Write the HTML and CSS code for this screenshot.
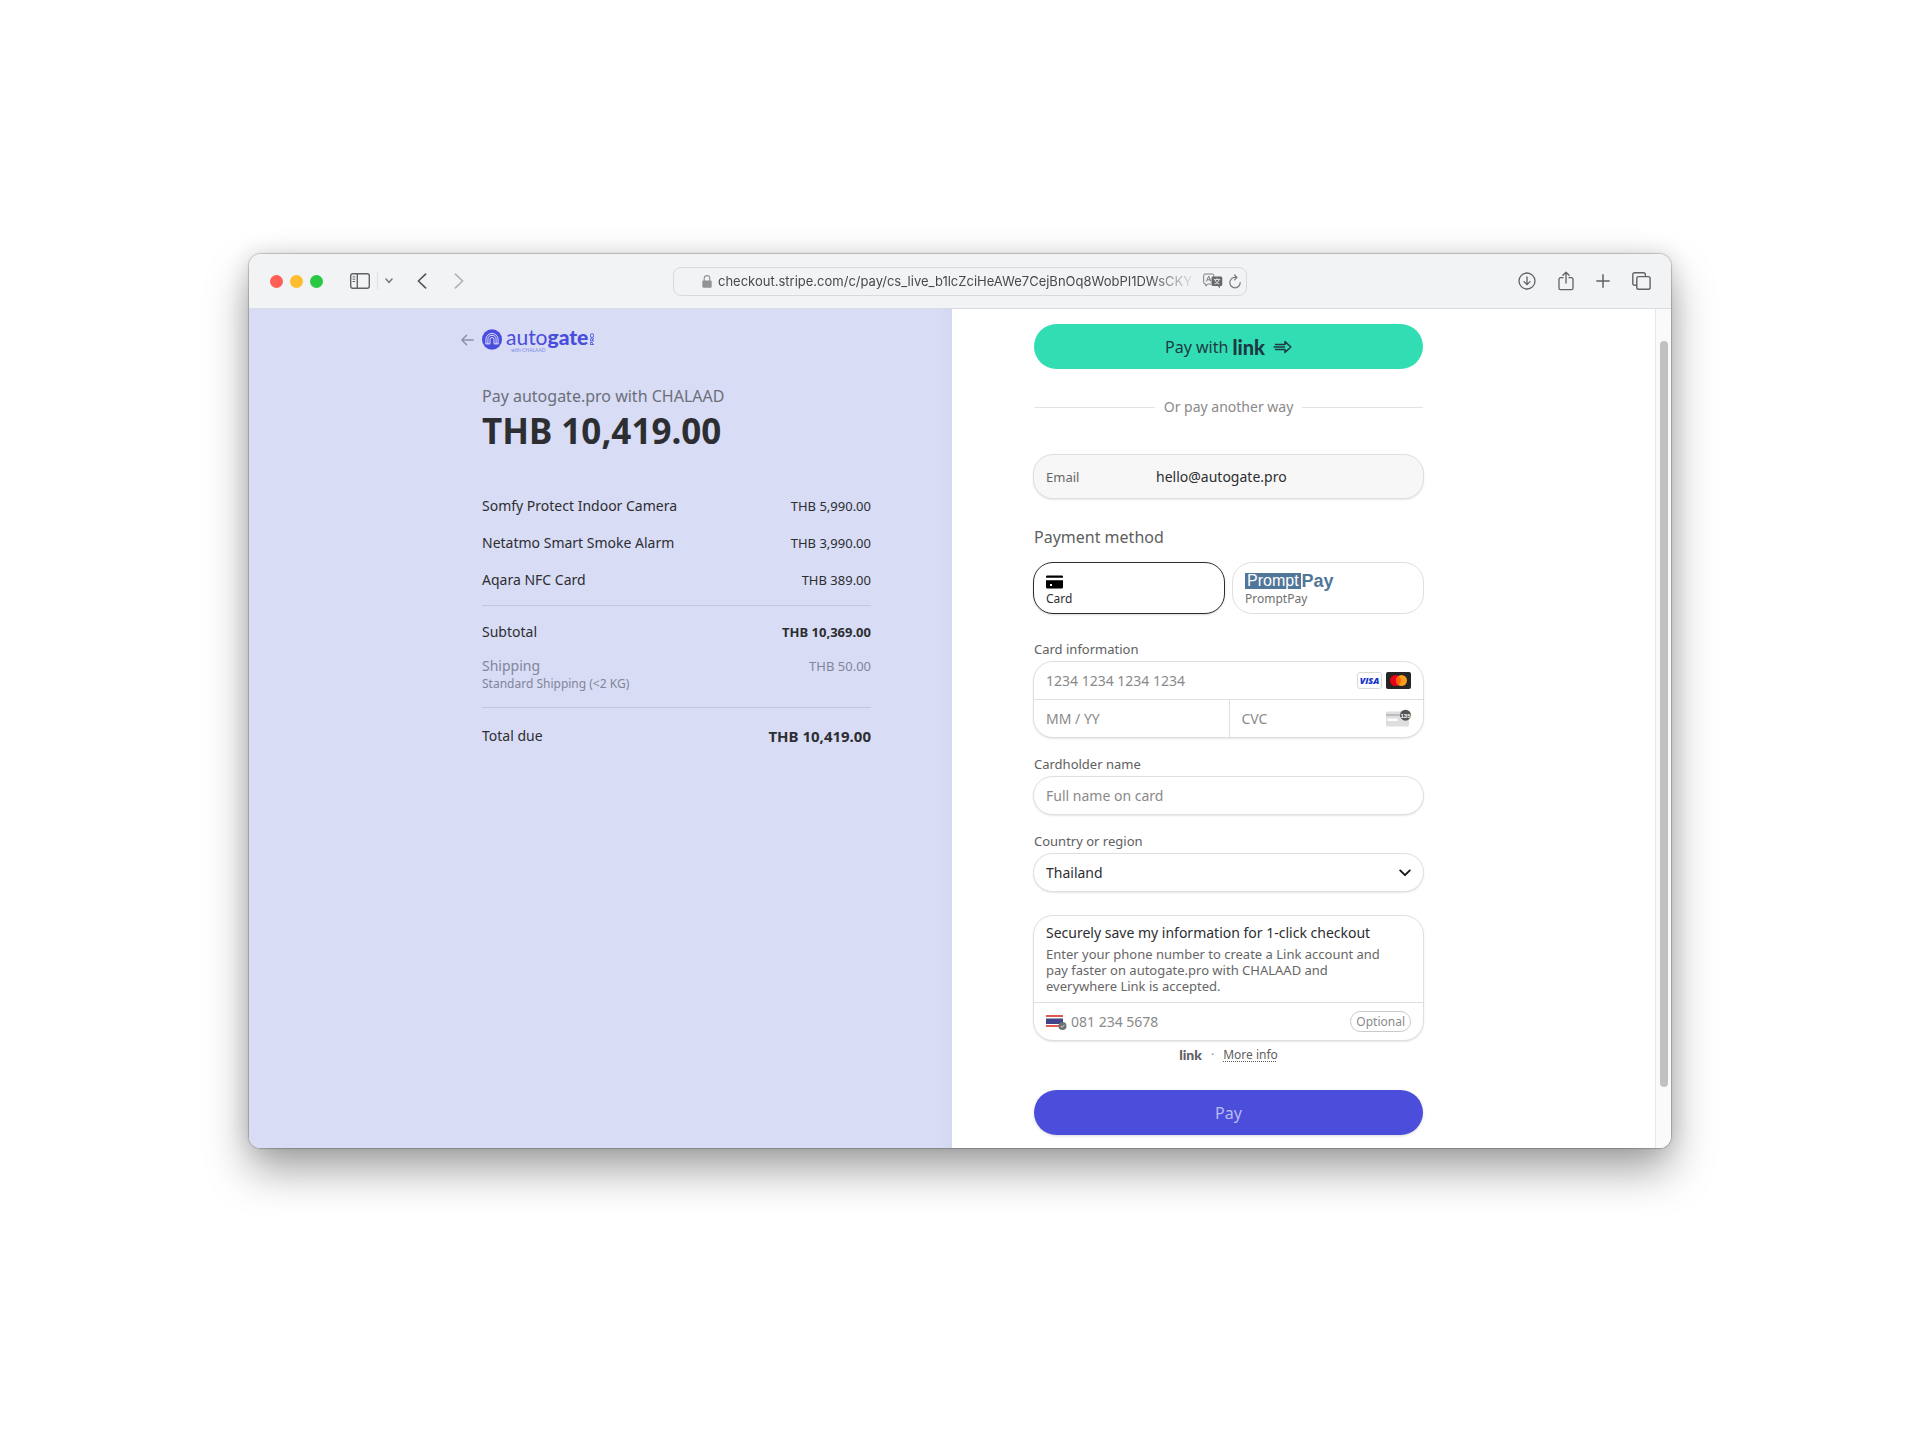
FILE: index.html
```html
<!DOCTYPE html>
<html lang="en">
<head>
<meta charset="utf-8">
<meta name="viewport" content="width=device-width, initial-scale=1">
<title>Checkout</title>
<link rel="stylesheet" href="styles.css">
</head>
<body>
<div class="window">
  <header class="toolbar">
    <div class="tools">
      <div class="lights"><span class="light red"></span><span class="light amber"></span><span class="light green"></span></div>
      <button class="tool sidebar" type="button" aria-label="Sidebar">
        <svg width="20" height="16" viewBox="0 0 20 16" fill="none" stroke="#616264" stroke-width="1.4"><rect x=".7" y=".7" width="18.6" height="14.6" rx="2"/><path d="M7.3 1v14"/><path d="M2.6 3.9h2.6M2.6 6.2h2.6M2.6 8.5h2.6" stroke-width="1"/></svg>
      </button>
      <span class="rule"></span>
      <button class="tool menu" type="button" aria-label="Tab groups">
        <svg width="8" height="6" viewBox="0 0 8 6" fill="none" stroke="#757678" stroke-width="1.5" stroke-linecap="round"><path d="M1 1l3 3.4L7 1"/></svg>
      </button>
      <button class="tool back" type="button" aria-label="Back">
        <svg width="10" height="16" viewBox="0 0 10 16" fill="none" stroke="#555658" stroke-width="1.7" stroke-linecap="round" stroke-linejoin="round"><path d="M8.6 1.2L1.4 8l7.2 6.8"/></svg>
      </button>
      <button class="tool forward" type="button" aria-label="Forward">
        <svg width="10" height="16" viewBox="0 0 10 16" fill="none" stroke="#b2b3b5" stroke-width="1.7" stroke-linecap="round" stroke-linejoin="round"><path d="M1.4 1.2L8.6 8l-7.2 6.8"/></svg>
      </button>
    </div>
    <div class="address">
      <svg width="10" height="13" viewBox="0 0 10 13"><rect x=".3" y="5.4" width="9.4" height="7.4" rx="1.2" fill="#929394"/><path d="M2.2 6V3.4a2.8 2.8 0 0 1 5.600 0V6" fill="none" stroke="#929394" stroke-width="1.1"/></svg>
      <span class="url">checkout.stripe.com/c/pay/cs_live_b1lcZciHeAWe7CejBnOq8WobPI1DWsCKY</span>
      <button class="tool" type="button" aria-label="Translate">
        <svg width="20" height="16" viewBox="0 0 20 16"><path d="M2 1h7.500a1.300 1.300 0 0 1 1.300 1.300V4M8 11H4.600L3 13.200V11H2A1.300 1.300 0 0 1 .7 9.700V2.300A1.300 1.300 0 0 1 2 1" fill="none" stroke="#7b7c7e" stroke-width="1"/><path d="M3.400 8.600l2.300-5.600 2.200 5.600M4.200 6.800h3" fill="none" stroke="#7b7c7e"/><path d="M10 3.600h7.800A1.500 1.500 0 0 1 19.300 5v6.500a1.500 1.500 0 0 1-1.500 1.500H17v2.300L14.800 13H10a1.500 1.500 0 0 1-1.500-1.500V5A1.500 1.500 0 0 1 10 3.600z" fill="#68696b"/><path d="M10.800 6.600h6.400M14 5.200v1.400M12 6.800c.7 2.200 2.300 3.500 4.300 4.200M16 6.800c-.7 2.200-2.300 3.500-4.300 4.200" fill="none" stroke="#f1f3f4" stroke-width=".9"/></svg>
      </button>
      <button class="tool" type="button" aria-label="Reload">
        <svg width="12" height="15" viewBox="0 0 12 15" fill="none" stroke="#77787a" stroke-width="1.200" stroke-linecap="round" stroke-linejoin="round"><path d="M11.200 8.600A5.200 5.200 0 1 1 6 3.400h1.600M5.600 1l2.400 2.400-2.400 2.400"/></svg>
      </button>
    </div>
    <div class="tools end">
      <button class="tool" type="button" aria-label="Downloads">
        <svg width="18" height="18" viewBox="0 0 18 18" fill="none" stroke="#616264" stroke-width="1.300" stroke-linecap="round" stroke-linejoin="round"><circle cx="9" cy="9" r="8"/><path d="M9 5v7.300M6 9.600l3 3 3-3"/></svg>
      </button>
      <button class="tool" type="button" aria-label="Share">
        <svg width="16" height="20" viewBox="0 0 16 20" fill="none" stroke="#616264" stroke-width="1.300" stroke-linecap="round" stroke-linejoin="round"><path d="M5 6.700H2.500A1.500 1.500 0 0 0 1 8.200v9A1.500 1.500 0 0 0 2.500 18.700h11a1.500 1.500 0 0 0 1.500-1.500v-9a1.500 1.500 0 0 0-1.500-1.500H11M8 12V1.300M4.900 4.200L8 1.200l3.100 3"/></svg>
      </button>
      <button class="tool" type="button" aria-label="New tab">
        <svg width="14" height="14" viewBox="0 0 14 14" fill="none" stroke="#616264" stroke-width="1.500" stroke-linecap="round"><path d="M7 .8v12.400M.8 7h12.400"/></svg>
      </button>
      <button class="tool" type="button" aria-label="Show tabs">
        <svg width="19" height="18" viewBox="0 0 19 18" fill="none" stroke="#616264" stroke-width="1.400" stroke-linejoin="round"><path d="M4.800 13.200H2.600A1.800 1.800 0 0 1 .8 11.400V2.600A1.800 1.800 0 0 1 2.600.8h9a1.800 1.800 0 0 1 1.800 1.800v1.900"/><rect x="4.800" y="4.600" width="13.300" height="12.600" rx="1.800"/></svg>
      </button>
    </div>
  </header>

  <main class="page">
    <section class="summary">
      <div class="column">
        <a class="brand" href="#">
          <svg class="arrow" width="13" height="12" viewBox="0 0 13 12" fill="none" stroke="#8d90a6" stroke-width="1.500" stroke-linecap="round" stroke-linejoin="round"><path d="M12.200 6H1M5.600 1.200L.9 6l4.700 4.800"/></svg>
          <svg width="20" height="21" viewBox="0 0 20 21"><ellipse cx="10" cy="10.500" rx="10" ry="10.300" fill="#4a4ddc"/><g fill="none" stroke="#fff" stroke-width=".8"><path d="M3.900 14.800V10.500a6.100 6.100 0 0 1 12.200 0v4.300"/><path d="M5.900 14.800v-4.300a4.100 4.100 0 0 1 8.200 0v4.300"/><path d="M8 14.800V10.500a2 2 0 0 1 4 0v4.300M3.400 14.900h4.700M11.900 14.900h4.700"/></g></svg>
          <span class="wordmark"><span class="name">auto<b>gate</b></span><span class="byline">with CHALAAD</span></span>
          <span class="pro">PRO</span>
        </a>
        <h1 class="payee">Pay autogate.pro with CHALAAD</h1>
        <p class="amount">THB 10,419.00</p>
        <dl class="items">
          <div class="row"><dt>Somfy Protect Indoor Camera</dt><dd>THB 5,990.00</dd></div>
          <div class="row"><dt>Netatmo Smart Smoke Alarm</dt><dd>THB 3,990.00</dd></div>
          <div class="row"><dt>Aqara NFC Card</dt><dd>THB 389.00</dd></div>
        </dl>
        <dl class="items costs">
          <div class="row"><dt>Subtotal</dt><dd class="strong">THB 10,369.00</dd></div>
          <div class="row muted"><dt>Shipping<small>Standard Shipping (&lt;2 KG)</small></dt><dd>THB 50.00</dd></div>
        </dl>
        <dl class="items total">
          <div class="row"><dt>Total due</dt><dd class="strong big">THB 10,419.00</dd></div>
        </dl>
      </div>
    </section>

    <section class="payment">
      <form class="column">
        <button class="linkpay" type="button">Pay with <span class="linkmark">link</span>
          <svg width="19" height="14" viewBox="0 0 19 14" fill="none" stroke="#1d3944" stroke-width="1.500" stroke-linejoin="round" stroke-linecap="round"><path d="M2.500 4.500h9.500V1.600L17.800 7 12 12.400V9.500H2.500M1 7h10.500"/></svg>
        </button>
        <p class="or">Or pay another way</p>
        <div class="box email"><label for="email">Email</label><input id="email" type="email" value="hello@autogate.pro" readonly></div>

        <h2 class="heading">Payment method</h2>
        <div class="methods">
          <label class="box method chosen"><input type="radio" name="method" checked>
            <svg width="17" height="16" viewBox="0 0 17 16"><path d="M0 3.700A1.200 1.200 0 0 1 1.200 2.500h14.600A1.200 1.200 0 0 1 17 3.700v1H0z"/><path fill-rule="evenodd" d="M0 7.200h17v7a1.200 1.200 0 0 1-1.200 1.200H1.200A1.200 1.200 0 0 1 0 14.200zM4 11.100v1.800h2v-1.800z"/></svg>
            <span>Card</span></label>
          <label class="box method"><input type="radio" name="method">
            <span class="promptpay"><span class="prompt">Prompt</span><b>Pay</b></span>
            <span>PromptPay</span></label>
        </div>

        <label class="label" for="number">Card information</label>
        <div class="box card">
          <div class="cell wide"><input id="number" type="text" placeholder="1234 1234 1234 1234">
            <span class="visa">VISA</span>
            <svg width="25" height="17" viewBox="0 0 25 17"><rect width="25" height="17" rx="2" fill="#252525"/><circle cx="9.500" cy="8.500" r="5.500" fill="#eb001b"/><circle cx="15.500" cy="8.500" r="5.500" fill="#f79e1b"/><path d="M12.500 3.900a5.500 5.500 0 0 1 0 9.200 5.500 5.500 0 0 1 0-9.200z" fill="#ff5f00"/></svg>
          </div>
          <div class="cell"><input type="text" placeholder="MM / YY" aria-label="Expiration"></div>
          <div class="cell"><input type="text" placeholder="CVC" aria-label="CVC">
            <svg width="25" height="21" viewBox="0 0 25 21"><rect y="3.500" width="23" height="15" rx="1.500" fill="#dedede"/><rect y="6" width="23" height="2" fill="#bdbdbd"/><rect x="1.500" y="10.500" width="10" height="2.500" fill="#fff"/><circle cx="19.500" cy="7.200" r="5.500" fill="#545454"/><text class="digits" x="19.500" y="9.500" text-anchor="middle">135</text></svg>
          </div>
        </div>

        <label class="label next" for="holder">Cardholder name</label>
        <div class="box field"><input id="holder" type="text" placeholder="Full name on card"></div>

        <label class="label next" for="country">Country or region</label>
        <div class="box field">
          <select id="country"><option>Thailand</option></select>
          <svg width="12" height="8" viewBox="0 0 12 8" fill="none" stroke="#111" stroke-width="1.800" stroke-linecap="round" stroke-linejoin="round"><path d="M1.200 1.400L6 6.200l4.800-4.800"/></svg>
        </div>

        <div class="box save">
          <div class="pitch">
            <h3>Securely save my information for 1-click checkout</h3>
            <p>Enter your phone number to create a Link account and pay faster on autogate.pro with CHALAAD and everywhere Link is accepted.</p>
          </div>
          <div class="phone">
            <svg width="21" height="16" viewBox="0 0 21 16"><rect y="1" width="17" height="12" fill="#e25950"/><rect y="3" width="17" height="8" fill="#fff"/><rect y="4.500" width="17" height="5.500" fill="#43458b"/><circle cx="16.500" cy="12" r="4" fill="#6f7074"/><path d="M14.900 12l1.300 1.300 2.300-2.500" fill="none" stroke="#d6d6d6"/></svg>
            <input type="tel" placeholder="081 234 5678" aria-label="Phone number">
            <span class="optional">Optional</span>
          </div>
        </div>
        <p class="info"><span class="linkmark">link</span><span class="dot">·</span><a href="#">More info</a></p>
        <button class="pay" type="submit">Pay</button>
      </form>
    </section>
    <div class="scroll"><div class="thumb"></div></div>
  </main>
</div>
</body>
</html>
```

FILE: styles.css
```css
* { box-sizing: border-box; }
body {
  margin: 0;
  padding: 254px 249px 292px;
  background: #fff;
  color: #2d2e31;
  font: 14px/20px "Noto Sans", sans-serif;
}
h1, h2, h3, p, dl, dd { margin: 0; font-weight: 400; }
svg { display: block; flex: none; }
button, input, select { margin: 0; padding: 0; border: 0; background: none; font: inherit; color: inherit; }
input { min-width: 0; outline: 0; }
input::placeholder { color: #8a8a8a; opacity: 1; }

.window {
  border-radius: 12px;
  overflow: hidden;
  box-shadow: 0 0 1px 1px rgba(0, 0, 0, .2), 0 22px 44px rgba(0, 0, 0, .36), 0 0 22px rgba(0, 0, 0, .12);
}

/* browser toolbar */
.toolbar {
  display: grid;
  grid-template-columns: 1fr minmax(0, 574px) 1fr;
  align-items: center;
  height: 55px;
  padding: 0 20px;
  background: #f1f3f4;
  border-bottom: 1px solid #d9dbe3;
}
.tools { display: flex; align-items: center; }
.tools.end { justify-content: flex-end; gap: 22px; }
.tool { display: flex; }
.lights { display: flex; gap: 7px; padding: 0 27px 0 1px; }
.light { width: 13px; height: 13px; border-radius: 50%; }
.red { background: #ff5f57; }
.amber { background: #febc2e; }
.green { background: #28c840; }
.rule { width: 1px; height: 18px; margin: 0 7px; background: #dfe0e2; }
.back { margin-left: 24px; }
.forward { margin-left: 27px; }
.address {
  display: flex;
  align-items: center;
  gap: 6px;
  height: 29px;
  padding: 0 5px 0 28px;
  border: 1px solid #d8dadc;
  border-radius: 8px;
}
.url {
  flex: 1;
  overflow: hidden;
  white-space: nowrap;
  font: 13px/20px Inter, sans-serif;
  color: #48494b;
  -webkit-mask-image: linear-gradient(90deg, #000 90%, transparent);
  mask-image: linear-gradient(90deg, #000 90%, transparent);
}

/* page panes */
.page { display: grid; grid-template-columns: 1fr 1fr 16px; background: #fff; }
.summary {
  padding: 15px 81px 0;
  background: linear-gradient(270deg, #d3d7f0, #d8dcf5 12px);
}
.payment { padding: 15px 82px 13px; }
.column { display: flex; flex-direction: column; max-width: 389px; }
.summary .column { margin-left: auto; }
.scroll { padding: 32px 4px 61px; background: #fafafa; border-left: 1px solid #e8e8e8; }
.thumb { width: 8px; height: 100%; border-radius: 4px; background: #c1c1c1; }

/* order summary */
.brand {
  display: flex;
  align-items: center;
  height: 31px;
  margin-left: -21px;
  color: #4a4ddc;
  text-decoration: none;
}
.arrow { margin-right: 8px; }
.wordmark { display: flex; flex-direction: column; margin-left: 4px; font-family: Lato, sans-serif; }
.name { font-size: 21px; line-height: 22px; }
.name b { font-weight: 900; }
.byline { font-size: 5px; line-height: 5px; padding-left: 5px; color: #7f88ea; }
.pro { writing-mode: vertical-rl; transform: rotate(180deg); font: 900 6px/7px Lato, sans-serif; }
.payee { margin-top: 30px; font-size: 16px; line-height: 22px; color: #6c6e7a; }
.amount { margin-top: 2px; font-size: 35px; line-height: 44px; font-weight: 700; }
.items { display: flex; flex-direction: column; gap: 17px; margin-top: 43px; padding-bottom: 15px; border-bottom: 1px solid #c3c7de; }
.row { display: flex; justify-content: space-between; }
.row dd { font-size: 13px; }
.row small { display: block; font-size: 12px; line-height: 16px; }
.muted { color: #82859a; }
.row .strong { font-weight: 700; }
.row .big { font-size: 15px; }
.costs { gap: 14px; margin-top: 16px; padding-bottom: 15px; }
.total { margin-top: 18px; border: 0; }

/* payment form */
.linkpay, .pay { height: 45px; border-radius: 23px; font-size: 16px; }
.linkpay { display: flex; align-items: center; justify-content: center; gap: 4px; background: #33ddb3; color: #1d3944; }
.linkpay svg { margin-left: 4px; }
.linkmark { font: 900 20px/20px Lato, sans-serif; }
.or { display: flex; align-items: center; gap: 9px; margin: 28px 0 37px; color: #8a8a8a; }
.or::before, .or::after { content: ""; flex: 1; height: 1px; background: #e3e3e3; }
.box {
  margin: 0 -1px;
  border: 1px solid #dfdfdf;
  border-radius: 20px;
  background: #fff;
  box-shadow: 0 1px 2px rgba(0, 0, 0, .1);
}
.email { display: flex; align-items: center; height: 45px; padding: 0 12px; background: #f7f7f7; }
.email label { width: 110px; font-size: 13px; color: #666; }
.email input { flex: 1; }
.heading { margin: 27px 0 14px; font-size: 16px; line-height: 22px; color: #606060; }
.methods { display: grid; grid-template-columns: 1fr 1fr; gap: 7px; margin: 0 -1px 27px; }
.method { display: flex; flex-direction: column; height: 52px; margin: 0; padding: 10px 12px; box-shadow: none; font-size: 12px; line-height: 20px; color: #6f6f6f; }
.method input { position: absolute; opacity: 0; }
.chosen { border-color: #2d2e31; color: #2d2e31; box-shadow: 0 1px 2px rgba(0, 0, 0, .15); }
.promptpay { display: flex; gap: 1px; font: 18px/16px "Liberation Sans", sans-serif; color: #507699; }
.prompt { padding: 0 2px; background: #507699; color: #fff; font-size: 16px; }
.label { margin-bottom: 4px; font-size: 13px; line-height: 16px; color: #606060; }
.next { margin-top: 18px; }
.card { display: grid; grid-template-columns: repeat(2, minmax(0, 1fr)); overflow: hidden; }
.cell { display: flex; align-items: center; gap: 4px; height: 37px; padding: 0 12px; }
.cell input { flex: 1; }
.cell + .cell { border-left: 1px solid #dfdfdf; }
.wide { grid-column: 1 / -1; height: 38px; border-bottom: 1px solid #dfdfdf; }
.wide + .cell { border-left: 0; }
.visa { width: 25px; border: 1px solid #d9d9d9; border-radius: 3px; font: italic 800 9px/15px "Open Sans", sans-serif; text-align: center; color: #1434cb; }
.digits { font: bold 6px "Liberation Sans", sans-serif; fill: #fff; }
.field { display: flex; align-items: center; height: 39px; padding: 0 12px; }
.field input, .field select { flex: 1; }
.field select { appearance: none; }
.save { margin-top: 23px; }
.pitch { padding: 6px 24px 8px 12px; border-bottom: 1px solid #dfdfdf; }
.pitch h3 { font-size: 14px; line-height: 22px; }
.pitch p { margin-top: 2px; font-size: 13px; line-height: 16px; color: #666; }
.phone { display: flex; align-items: center; gap: 4px; height: 37px; padding: 0 12px; }
.phone input { flex: 1; }
.optional { padding: 0 5px; border: 1px solid #c9c9c9; border-radius: 11px; font-size: 12px; line-height: 19px; color: #8a8a8a; }
.info { display: flex; justify-content: center; gap: 9px; margin: 6px 0 27px; font-size: 12px; line-height: 16px; color: #606060; }
.info .linkmark { font-size: 14px; line-height: 16px; }
.info a { color: inherit; text-decoration: underline dotted; text-underline-offset: 2px; }
.dot { color: #8a8a8a; }
.pay { background: #4b4ddb; color: #b9baf2; box-shadow: 0 1px 3px rgba(0, 0, 0, .15); }
```
